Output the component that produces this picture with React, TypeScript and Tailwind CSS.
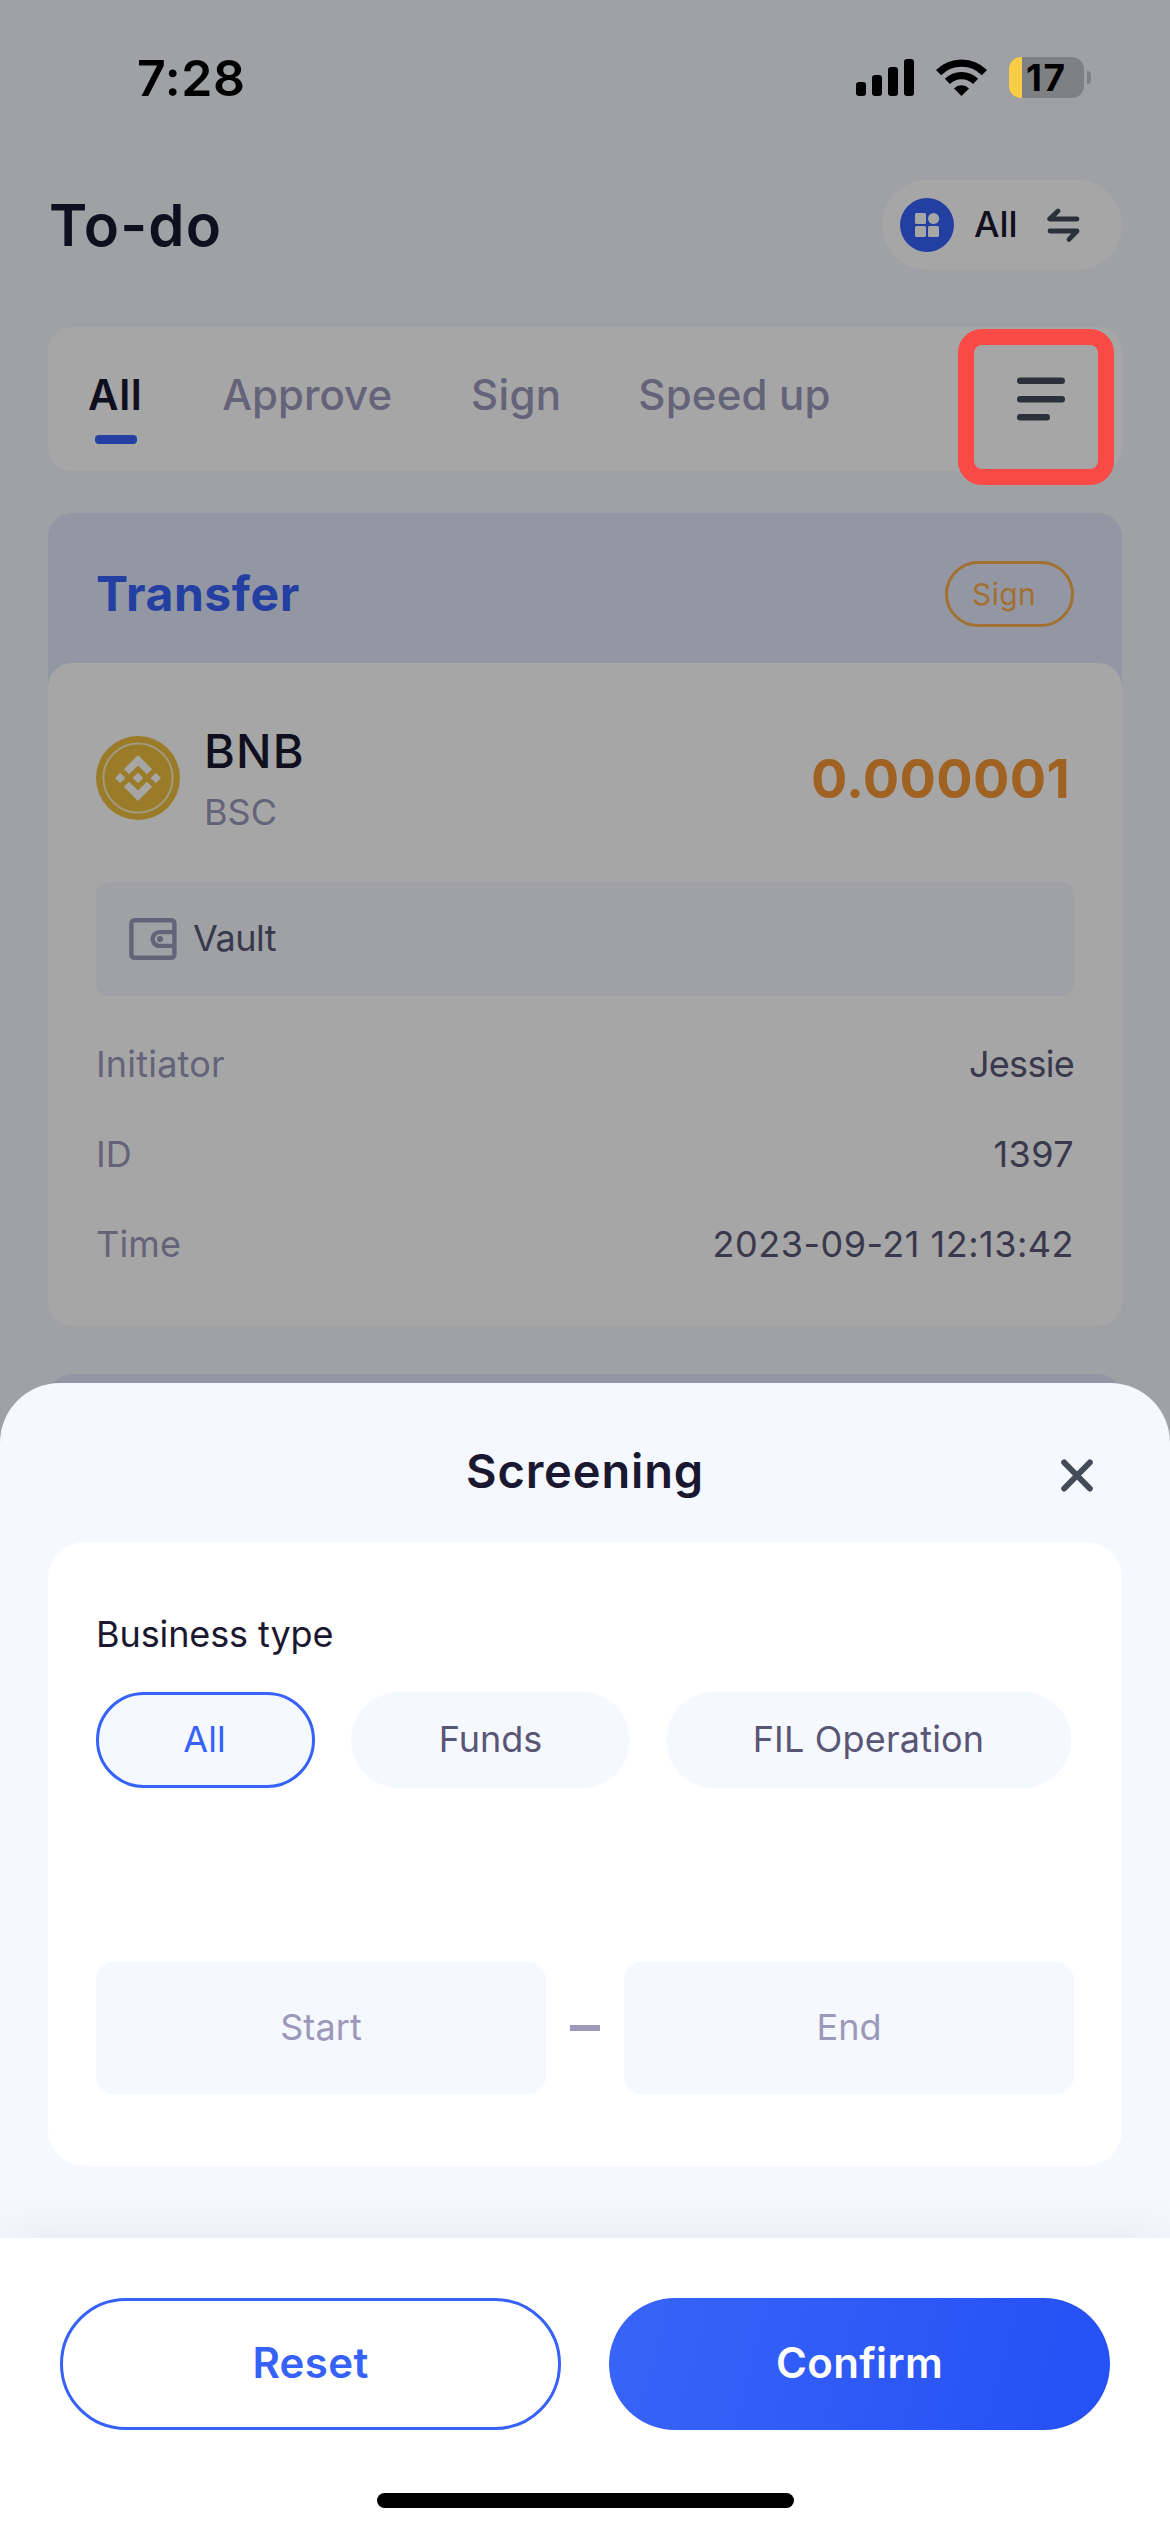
import React from 'react';

function SignalIcon() {
  return (
    <svg width="58" height="37" viewBox="0 0 58 37" fill="#000">
      <rect x="0" y="23" width="10" height="14" rx="3" />
      <rect x="16" y="16" width="10" height="21" rx="3" />
      <rect x="32" y="8" width="10" height="29" rx="3" />
      <rect x="48" y="0" width="10" height="37" rx="3" />
    </svg>
  );
}

function WifiIcon() {
  return (
    <svg width="51" height="37" viewBox="0 0 51 37" fill="none">
      <path d="M2.6 13.4 A32.5 32.5 0 0 1 48.4 13.4" stroke="#000" strokeWidth="7.4" transform="translate(0 0.2)" />
      <path d="M11.4 22.4 A20 20 0 0 1 39.6 22.4" stroke="#000" strokeWidth="7.2" />
      <path d="M25.5 37 L18 29.4 A10.8 10.8 0 0 1 33 29.4 Z" fill="#000" />
    </svg>
  );
}

function Battery() {
  return (
    <div className="flex items-center gap-[3px]">
      <div className="flex h-[41px] w-[75px] items-center rounded-[12px] bg-[#7f8083]">
        <div className="h-[41px] w-[13px] shrink-0 rounded-l-[12px] bg-[#f8ce47]" />
        <span className="pl-[4px] text-[37px] font-bold leading-[46px] tracking-[1.5px] text-black">17</span>
      </div>
      <div className="h-[13px] w-[4px] rounded-r-full bg-[#7f8083]" />
    </div>
  );
}

function StatusBar() {
  return (
    <div className="absolute inset-x-0 top-0 flex h-[155px] items-center justify-between pl-[137px] pr-[79px]">
      <span className="text-[50px] font-semibold leading-[60px] tracking-[0.6px] text-black">7:28</span>
      <div className="flex items-center">
        <SignalIcon />
        <div className="ml-[22px]">
          <WifiIcon />
        </div>
        <div className="ml-[22px]">
          <Battery />
        </div>
      </div>
    </div>
  );
}

function GridIcon() {
  return (
    <svg width="54" height="54" viewBox="0 0 54 54">
      <circle cx="27" cy="27" r="27" fill="#3662f9" />
      <g fill="#fff">
        <rect x="15" y="15" width="11" height="11" rx="1.6" />
        <circle cx="33.6" cy="20.5" r="5.5" />
        <rect x="15" y="28" width="11" height="11" rx="1.6" />
        <rect x="28" y="28" width="11" height="11" rx="1.6" />
      </g>
    </svg>
  );
}

function SwapIcon() {
  return (
    <svg width="34" height="36" viewBox="0 0 34 36" fill="none" stroke="#434b59" strokeWidth="4.8" strokeLinecap="round" strokeLinejoin="round">
      <path d="M31 12 H3.6 L12 4" />
      <path d="M4 24 H31 L23 32.4" />
    </svg>
  );
}

function MenuIcon() {
  return (
    <svg width="48" height="44" viewBox="0 0 48 44" fill="#434b59">
      <rect x="0" y="0.5" width="48" height="6.4" rx="3.2" />
      <rect x="0" y="19" width="48" height="6.4" rx="3.2" />
      <rect x="0" y="37" width="33" height="6.4" rx="3.2" />
    </svg>
  );
}

function BnbIcon() {
  return (
    <svg width="84" height="84" viewBox="0 0 84 84">
      <circle cx="42" cy="42" r="42" fill="#edbd3c" />
      <circle cx="42" cy="42" r="34.6" fill="none" stroke="#f9ecc4" strokeWidth="2" />
      <path
        fill="#fff"
        transform="translate(5.2 5.2) scale(2.3)"
        d="M12.116 14.404L16 10.52l3.886 3.886 2.26-2.26L16 6l-6.144 6.144 2.26 2.26zM6 16l2.26-2.26L10.52 16l-2.26 2.26L6 16zm6.116 1.596L16 21.48l3.886-3.886 2.26 2.259L16 26l-6.144-6.144-.003-.003 2.263-2.257zM21.48 16l2.26-2.26L26 16l-2.26 2.26L21.48 16zm-3.188-.002h.002V16L16 18.294l-2.291-2.29-.004-.004.004-.003.401-.402.195-.195L16 13.706l2.293 2.293z"
      />
    </svg>
  );
}

function WalletIcon() {
  return (
    <svg width="48" height="42" viewBox="0 0 48 42" fill="none" stroke="#9b98ba" strokeWidth="4.4">
      <rect x="2.4" y="2.2" width="43" height="37.6" rx="3" />
      <path d="M45 14.1 H30.5 A6.9 6.9 0 0 0 30.5 27.9 H45" />
      <circle cx="31" cy="21" r="3.1" fill="#9b98ba" stroke="none" />
    </svg>
  );
}

function Row({ label, value, valueClass }: { label: string; value: string; valueClass: string }) {
  return (
    <div className="flex h-[90px] items-center justify-between text-[36px]">
      <span className="tracking-[0.2px] text-[#9b98ba]">{label}</span>
      <span className={`text-[#595675] ${valueClass}`}>{value}</span>
    </div>
  );
}

function TodoCard() {
  return (
    <section>
      <div className="flex h-[174px] justify-between rounded-t-[24px] bg-[#e1e8fb] px-[48px]">
        <h2 className="text-[48px] font-bold leading-[162px] tracking-[0.6px] text-[#3662f9]">Transfer</h2>
        <span className="mt-[48px] h-[66px] w-[129px] rounded-full border-[3px] border-[#f9ac4b] pl-[24px] text-[30px] leading-[61px] tracking-[0.4px] text-[#f9ac4b]">
          Sign
        </span>
      </div>
      <div className="relative -mt-[24px] h-[663px] rounded-[24px] bg-white px-[48px] pt-[58px]">
        <div className="flex items-start">
          <div className="mt-[15px]">
            <BnbIcon />
          </div>
          <div className="ml-[24px] flex flex-col">
            <span className="text-[47px] font-medium leading-[60px] tracking-[1.2px] text-[#1a1830]">BNB</span>
            <span className="text-[36px] leading-[62px] text-[#9b98ba]">BSC</span>
          </div>
          <span className="ml-auto mr-[4px] text-[54px] font-bold leading-[116px] tracking-[0.3px] text-[#f69737]">0.000001</span>
        </div>
        <div className="mt-[39px] flex h-[114px] items-center rounded-[12px] bg-[#f5f8fe] pl-[33px]">
          <WalletIcon />
          <span className="ml-[16px] pb-[2px] text-[36px] leading-none tracking-[-0.5px] text-[#595675]">Vault</span>
        </div>
        <div className="mt-[23px]">
          <Row label="Initiator" value="Jessie" valueClass="tracking-[-0.7px]" />
          <Row label="ID" value="1397" valueClass="tracking-[0.4px]" />
          <Row label="Time" value="2023-09-21 12:13:42" valueClass="tracking-[0.5px]" />
        </div>
      </div>
    </section>
  );
}

function TodoPage() {
  return (
    <main className="px-[48px] pt-[180px]">
      <header className="flex h-[90px] items-center justify-between">
        <h1 className="pl-[1px] text-[58px] font-semibold tracking-[1.1px] text-[#1a1830]">To-do</h1>
        <div className="flex h-[90px] w-[240px] items-center rounded-full bg-white pl-[18px]">
          <GridIcon />
          <span className="ml-[20px] pb-[2px] text-[36px] font-medium leading-none text-[#1a1830]">All</span>
          <div className="ml-[28px]">
            <SwapIcon />
          </div>
        </div>
      </header>

      <nav className="mt-[57px] flex h-[144px] rounded-[24px] bg-white pl-[40px] pr-[57px] pt-[44px] text-[42px] font-medium leading-[48px] text-[#9b98ba]">
        <div>
          <div className="font-semibold tracking-[0.6px] text-[#1a1830]">All</div>
          <div className="ml-[7px] mt-[16px] h-[9px] w-[42px] rounded-[4px] bg-[#3662f9]" />
        </div>
        <span className="ml-[80px]">Approve</span>
        <span className="ml-[79px] tracking-[0.3px]">Sign</span>
        <span className="ml-[77px] tracking-[0.2px]">Speed up</span>
        <div className="ml-auto mt-[6px]">
          <MenuIcon />
        </div>
      </nav>

      <div className="mt-[42px]">
        <TodoCard />
      </div>
      <div className="mt-[48px] h-[174px] rounded-t-[24px] bg-[#e1e8fb]" />
    </main>
  );
}

function ScreeningSheet() {
  return (
    <div className="absolute inset-x-0 bottom-0 flex h-[1149px] flex-col overflow-hidden rounded-t-[60px] bg-[#f5f8fe]">
      <div className="grid h-[159px] grid-cols-[1fr_auto_1fr]">
        <h2 className="col-start-2 text-[47px] font-semibold leading-[176px] tracking-[0.85px] text-[#1a1830]">Screening</h2>
        <svg className="mr-[77px] mt-[76px] justify-self-end" width="32" height="33" viewBox="0 0 32 33" fill="none" stroke="#434b59" strokeWidth="6" strokeLinecap="round">
          <path d="M3.2 3.5 L28.8 29.5 M28.8 3.5 L3.2 29.5" />
        </svg>
      </div>

      <div className="mx-[48px] h-[624px] rounded-[36px] bg-white px-[48px] pt-[67px] text-[36px]">
        <div className="leading-[50px] tracking-[-0.1px] text-[#1a1830]">Business type</div>
        <div className="mt-[33px] flex gap-[36px] leading-none text-[#595675]">
          <div className="flex h-[96px] w-[219px] items-center justify-center rounded-full border-[3px] border-[#3662f9] bg-[#f5f8fe] pb-[2px] pr-[2px] text-[#3662f9]">
            All
          </div>
          <div className="flex h-[96px] w-[279px] items-center justify-center rounded-full bg-[#f5f8fe] pb-[2px]">Funds</div>
          <div className="flex h-[96px] w-[405px] items-center justify-center rounded-full bg-[#f5f8fe] pb-[2px] tracking-[0.2px]">FIL Operation</div>
        </div>
        <div className="mt-[174px] flex items-center justify-between leading-none text-[#9b98ba]">
          <div className="flex h-[132px] w-[450px] items-center justify-center rounded-[18px] bg-[#f5f8fe] pb-[2px] tracking-[0.1px]">Start</div>
          <div className="h-[6px] w-[30px] bg-[#9b98ba]" />
          <div className="flex h-[132px] w-[450px] items-center justify-center rounded-[18px] bg-[#f5f8fe] pb-[2px]">End</div>
        </div>
      </div>

      <div className="mt-[72px] h-[294px] bg-white px-[60px] pt-[60px] shadow-[0_-6px_48px_rgba(0,0,0,0.06)]">
        <div className="flex justify-between text-[42px] font-semibold leading-none tracking-[0.35px]">
          <button className="h-[132px] w-[501px] rounded-full border-[3px] border-[#3662f9] pb-[2px] text-[#3662f9]">Reset</button>
          <button className="h-[132px] w-[501px] rounded-full bg-[linear-gradient(105deg,#3964f8_0%,#2450f5_100%)] pb-[2px] text-white">Confirm</button>
        </div>
        <div className="mx-auto mt-[63px] h-[15px] w-[417px] rounded-full bg-black" />
      </div>
    </div>
  );
}

export default function App() {
  return (
    <div className="relative h-[2532px] w-[1170px] overflow-hidden bg-[#f5f8fe] font-['Inter',sans-serif]">
      <TodoPage />
      <div className="absolute inset-0 bg-black/35" />
      <StatusBar />
      <div className="absolute left-[958px] top-[329px] h-[156px] w-[156px] rounded-[24px] border-[16px] border-[#f94a46]" />
      <ScreeningSheet />
    </div>
  );
}
